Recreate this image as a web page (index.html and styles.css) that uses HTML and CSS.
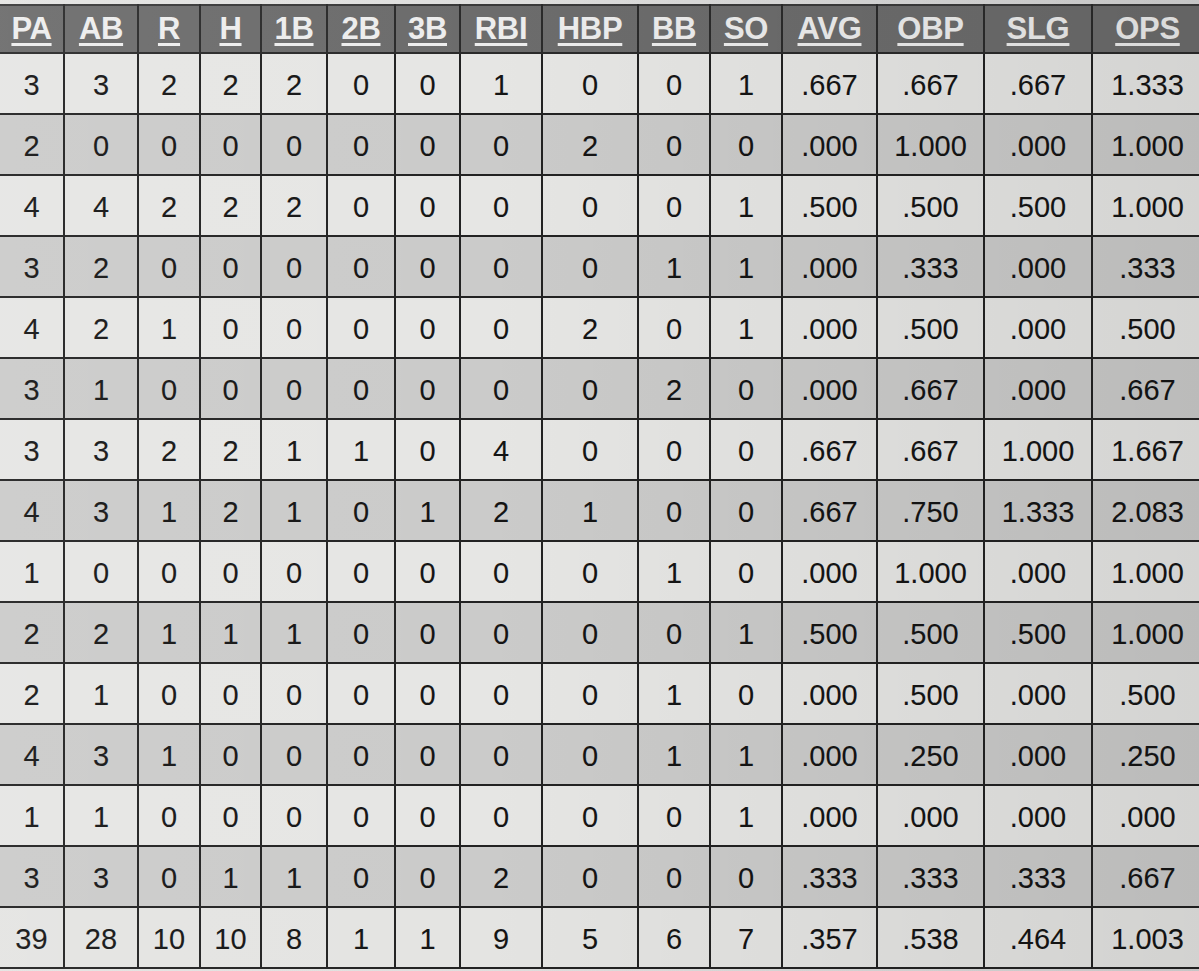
FILE: index.html
```html
<!DOCTYPE html>
<html>
<head>
<meta charset="utf-8">
<link rel="stylesheet" href="styles.css">
</head>
<body>
<div class="sheet">
<table class="stats">
<colgroup>
<col class="c64"><col class="c74"><col class="c62"><col class="c61"><col class="c66"><col class="c68"><col class="c65"><col class="c82"><col class="c96"><col class="c72"><col class="c72"><col class="c95"><col class="c107"><col class="c108"><col class="c110">
</colgroup>
<thead>
<tr><th><span>PA</span></th><th><span>AB</span></th><th><span>R</span></th><th><span>H</span></th><th><span>1B</span></th><th><span>2B</span></th><th><span>3B</span></th><th><span>RBI</span></th><th><span>HBP</span></th><th><span>BB</span></th><th><span>SO</span></th><th><span>AVG</span></th><th><span>OBP</span></th><th><span>SLG</span></th><th><span>OPS</span></th></tr>
</thead>
<tbody>
<tr><td>3</td><td>3</td><td>2</td><td>2</td><td>2</td><td>0</td><td>0</td><td>1</td><td>0</td><td>0</td><td>1</td><td>.667</td><td>.667</td><td>.667</td><td>1.333</td></tr>
<tr><td>2</td><td>0</td><td>0</td><td>0</td><td>0</td><td>0</td><td>0</td><td>0</td><td>2</td><td>0</td><td>0</td><td>.000</td><td>1.000</td><td>.000</td><td>1.000</td></tr>
<tr><td>4</td><td>4</td><td>2</td><td>2</td><td>2</td><td>0</td><td>0</td><td>0</td><td>0</td><td>0</td><td>1</td><td>.500</td><td>.500</td><td>.500</td><td>1.000</td></tr>
<tr><td>3</td><td>2</td><td>0</td><td>0</td><td>0</td><td>0</td><td>0</td><td>0</td><td>0</td><td>1</td><td>1</td><td>.000</td><td>.333</td><td>.000</td><td>.333</td></tr>
<tr><td>4</td><td>2</td><td>1</td><td>0</td><td>0</td><td>0</td><td>0</td><td>0</td><td>2</td><td>0</td><td>1</td><td>.000</td><td>.500</td><td>.000</td><td>.500</td></tr>
<tr><td>3</td><td>1</td><td>0</td><td>0</td><td>0</td><td>0</td><td>0</td><td>0</td><td>0</td><td>2</td><td>0</td><td>.000</td><td>.667</td><td>.000</td><td>.667</td></tr>
<tr><td>3</td><td>3</td><td>2</td><td>2</td><td>1</td><td>1</td><td>0</td><td>4</td><td>0</td><td>0</td><td>0</td><td>.667</td><td>.667</td><td>1.000</td><td>1.667</td></tr>
<tr><td>4</td><td>3</td><td>1</td><td>2</td><td>1</td><td>0</td><td>1</td><td>2</td><td>1</td><td>0</td><td>0</td><td>.667</td><td>.750</td><td>1.333</td><td>2.083</td></tr>
<tr><td>1</td><td>0</td><td>0</td><td>0</td><td>0</td><td>0</td><td>0</td><td>0</td><td>0</td><td>1</td><td>0</td><td>.000</td><td>1.000</td><td>.000</td><td>1.000</td></tr>
<tr><td>2</td><td>2</td><td>1</td><td>1</td><td>1</td><td>0</td><td>0</td><td>0</td><td>0</td><td>0</td><td>1</td><td>.500</td><td>.500</td><td>.500</td><td>1.000</td></tr>
<tr><td>2</td><td>1</td><td>0</td><td>0</td><td>0</td><td>0</td><td>0</td><td>0</td><td>0</td><td>1</td><td>0</td><td>.000</td><td>.500</td><td>.000</td><td>.500</td></tr>
<tr><td>4</td><td>3</td><td>1</td><td>0</td><td>0</td><td>0</td><td>0</td><td>0</td><td>0</td><td>1</td><td>1</td><td>.000</td><td>.250</td><td>.000</td><td>.250</td></tr>
<tr><td>1</td><td>1</td><td>0</td><td>0</td><td>0</td><td>0</td><td>0</td><td>0</td><td>0</td><td>0</td><td>1</td><td>.000</td><td>.000</td><td>.000</td><td>.000</td></tr>
<tr><td>3</td><td>3</td><td>0</td><td>1</td><td>1</td><td>0</td><td>0</td><td>2</td><td>0</td><td>0</td><td>0</td><td>.333</td><td>.333</td><td>.333</td><td>.667</td></tr>
<tr class="total"><td>39</td><td>28</td><td>10</td><td>10</td><td>8</td><td>1</td><td>1</td><td>9</td><td>5</td><td>6</td><td>7</td><td>.357</td><td>.538</td><td>.464</td><td>1.003</td></tr>
</tbody>
</table>
<div class="shade"></div>
</div>
</body>
</html>
```

FILE: styles.css
```css
html, body {
  margin: 0;
  padding: 0;
  background: #dedede;
  overflow: hidden;
}

.sheet {
  position: relative;
  width: 1199px;
  height: 971px;
  overflow: hidden;
  padding-top: 4px;
  box-sizing: border-box;
  background: linear-gradient(to right, #e4e4e2, #d6d6d6);
}

.stats {
  border-collapse: collapse;
  table-layout: fixed;
  width: 1203px;
  font-family: "Liberation Sans", Arial, sans-serif;
  color: #141414;
}

.c64 { width: 64px; }
.c74 { width: 74px; }
.c62 { width: 62px; }
.c61 { width: 61px; }
.c66 { width: 66px; }
.c68 { width: 68px; }
.c65 { width: 65px; }
.c82 { width: 82px; }
.c96 { width: 96px; }
.c72 { width: 72px; }
.c95 { width: 95px; }
.c107 { width: 107px; }
.c108 { width: 108px; }
.c110 { width: 111px; }

.stats th {
  background: #6c6c6c;
  height: 46px;
  padding: 0;
  border: 2px solid #2a2a2a;
  border-top: 2px solid #3a3a3a;
  font-size: 31px;
  font-weight: bold;
  letter-spacing: -0.3px;
  color: #ededed;
  text-align: center;
  vertical-align: middle;
}

.stats th span {
  text-decoration: underline;
  text-decoration-thickness: 3px;
  text-underline-offset: 4px;
}

.stats td {
  height: 56px;
  padding: 3px 0 0;
  border: 2px solid #222;
  font-size: 29px;
  -webkit-text-stroke: 0.1px #141414;
  text-align: center;
  vertical-align: middle;
  background: #e6e6e4;
}

.stats tbody tr:nth-child(even) td {
  background: #cbcbca;
}

.stats th:first-child,
.stats td:first-child {
  border-left: none;
}

.stats .total td {
  background: #e4e4e2;
}

.shade {
  position: absolute;
  inset: 0;
  pointer-events: none;
  background: linear-gradient(to right, rgba(255,255,255,0.06), rgba(0,0,0,0) 40%, rgba(0,0,0,0.08));
}
```
